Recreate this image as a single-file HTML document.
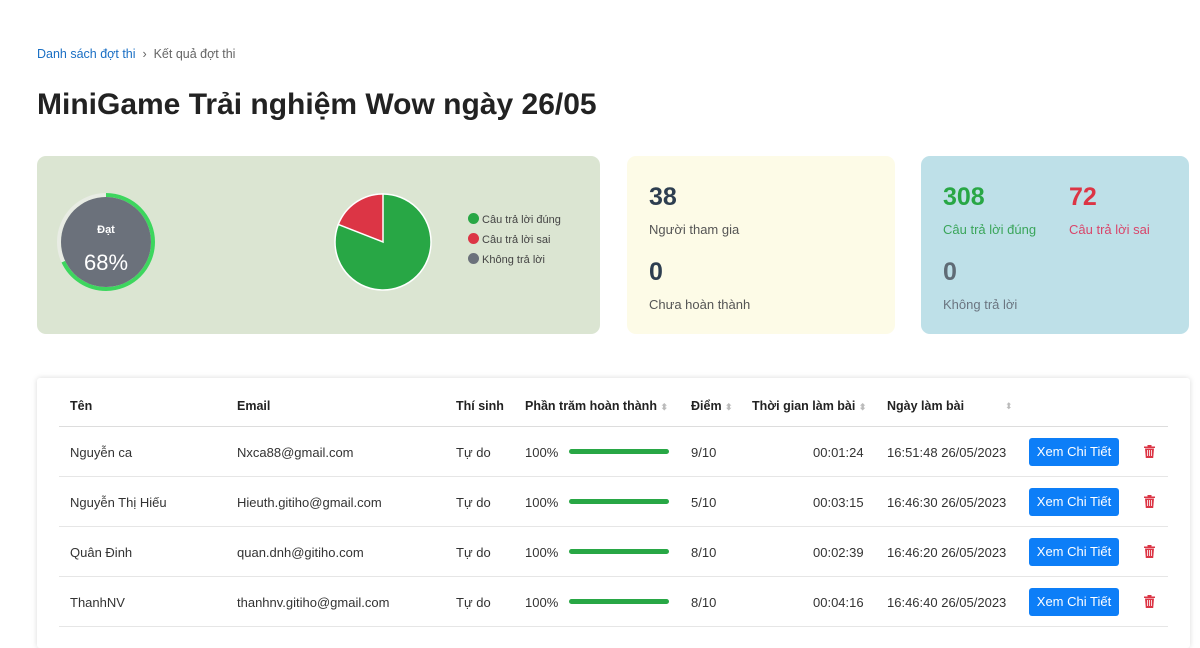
<!DOCTYPE html>
<html><head><meta charset="utf-8"><style>
*{box-sizing:border-box;margin:0;padding:0}
body{width:1200px;height:630px;overflow:hidden;background:#fff;font-family:"Liberation Sans",sans-serif;color:#333;position:relative}
.a{position:absolute;white-space:nowrap}
.card{position:absolute;border-radius:9px}
.big{font-size:25px;font-weight:bold}
.lbl{font-size:13px}
.th{font-size:12.5px;font-weight:bold;color:#222}
.td{font-size:13px;color:#333}
.bar{position:absolute;left:569px;width:100px;height:5px;border-radius:3px;background:#28a745}
.btn{position:absolute;left:1029px;width:90px;height:28px;background:#0d7ef7;color:#fff;border-radius:3px;font-size:13px;text-align:center;line-height:28px}
.line{position:absolute;left:59px;width:1109px;height:1px;background:#e6e6e6}
.s{font-size:9px;color:#bbb;letter-spacing:-1px}
</style></head><body>
<div class="a" style="left:37px;top:47px;font-size:12.5px;color:#1a6fc4">Danh sách đợt thi <span style="color:#666">&nbsp;›&nbsp; Kết quả đợt thi</span></div>
<div class="a" style="left:37px;top:88px;font-size:30px;font-weight:bold;color:#222">MiniGame Trải nghiệm Wow ngày 26/05</div>

<div class="card" style="left:37px;top:156px;width:563px;height:178px;background:#dbe5d2"></div>
<svg class="a" style="left:56px;top:192px" width="100" height="100" viewBox="0 0 100 100">
<circle cx="50" cy="50" r="47" fill="none" stroke="#e8ece4" stroke-width="4"/>
<circle cx="50" cy="50" r="47" fill="none" stroke="#3dd65e" stroke-width="4" stroke-dasharray="200.8 295.3" transform="rotate(-90 50 50)"/>
<circle cx="50" cy="50" r="45" fill="#6b717b"/>
<text x="50" y="41" text-anchor="middle" fill="#fff" font-size="11" font-weight="bold" font-family="Liberation Sans">Đạt</text>
<text x="50" y="78" text-anchor="middle" fill="#fff" font-size="22" font-family="Liberation Sans">68%</text>
</svg>
<svg class="a" style="left:333px;top:192px" width="100" height="100" viewBox="0 0 100 100">
<circle cx="50" cy="50" r="48" fill="#28a745" stroke="#fff" stroke-width="1.5"/>
<path d="M50 50 L50 2 A48 48 0 0 0 5.3 32.4 Z" fill="#dc3545" stroke="#fff" stroke-width="1.5"/>
</svg>
<div class="a" style="left:468px;top:210px;font-size:11px;color:#444;line-height:20px">
<div><span style="display:inline-block;width:11px;height:11px;border-radius:50%;background:#28a745;vertical-align:-1px"></span> Câu trả lời đúng</div>
<div><span style="display:inline-block;width:11px;height:11px;border-radius:50%;background:#dc3545;vertical-align:-1px"></span> Câu trả lời sai</div>
<div><span style="display:inline-block;width:11px;height:11px;border-radius:50%;background:#6b717b;vertical-align:-1px"></span> Không trả lời</div>
</div>

<div class="card" style="left:627px;top:156px;width:268px;height:178px;background:#fdfbe7"></div>
<div class="a big" style="left:649px;top:183px;color:#2e3e50">38</div>
<div class="a lbl" style="left:649px;top:222px;color:#555">Người tham gia</div>
<div class="a big" style="left:649px;top:258px;color:#2e3e50">0</div>
<div class="a lbl" style="left:649px;top:297px;color:#555">Chưa hoàn thành</div>

<div class="card" style="left:921px;top:156px;width:268px;height:178px;background:#bee0e8"></div>
<div class="a big" style="left:943px;top:183px;color:#28a745">308</div>
<div class="a big" style="left:1069px;top:183px;color:#dc3545">72</div>
<div class="a lbl" style="left:943px;top:222px;color:#3aa55a">Câu trả lời đúng</div>
<div class="a lbl" style="left:1069px;top:222px;color:#d9456a">Câu trả lời sai</div>
<div class="a big" style="left:943px;top:258px;color:#5f6b75">0</div>
<div class="a lbl" style="left:943px;top:297px;color:#6b7580">Không trả lời</div>

<div class="card" style="left:37px;top:378px;width:1153px;height:270px;border-radius:3px;box-shadow:0 0 6px rgba(0,0,0,.15)"></div>
<div class="a th" style="left:70px;top:399px">Tên</div>
<div class="a th" style="left:237px;top:399px">Email</div>
<div class="a th" style="left:456px;top:399px">Thí sinh</div>
<div class="a th" style="left:525px;top:399px">Phần trăm hoàn thành <span class="s">⬍</span></div>
<div class="a th" style="left:691px;top:399px">Điểm <span class="s">⬍</span></div>
<div class="a th" style="left:752px;top:399px">Thời gian làm bài <span class="s">⬍</span></div>
<div class="a th" style="left:887px;top:399px">Ngày làm bài</div>
<div class="a s" style="left:1005px;top:401px">⬍</div>
<div class="line" style="top:426px;background:#ddd"></div>

<div class="a td" style="left:70px;top:445px">Nguyễn ca</div>
<div class="a td" style="left:237px;top:445px">Nxca88@gmail.com</div>
<div class="a td" style="left:456px;top:445px">Tự do</div>
<div class="a td" style="left:525px;top:445px">100%</div><div class="bar" style="top:449px"></div>
<div class="a td" style="left:691px;top:445px">9/10</div>
<div class="a td" style="left:813px;top:445px">00:01:24</div>
<div class="a td" style="left:887px;top:445px">16:51:48 26/05/2023</div>
<div class="btn" style="top:438px">Xem Chi Tiết</div>
<div class="line" style="top:476px"></div>

<div class="a td" style="left:70px;top:495px">Nguyễn Thị Hiếu</div>
<div class="a td" style="left:237px;top:495px">Hieuth.gitiho@gmail.com</div>
<div class="a td" style="left:456px;top:495px">Tự do</div>
<div class="a td" style="left:525px;top:495px">100%</div><div class="bar" style="top:499px"></div>
<div class="a td" style="left:691px;top:495px">5/10</div>
<div class="a td" style="left:813px;top:495px">00:03:15</div>
<div class="a td" style="left:887px;top:495px">16:46:30 26/05/2023</div>
<div class="btn" style="top:488px">Xem Chi Tiết</div>
<div class="line" style="top:526px"></div>

<div class="a td" style="left:70px;top:545px">Quân Đinh</div>
<div class="a td" style="left:237px;top:545px">quan.dnh@gitiho.com</div>
<div class="a td" style="left:456px;top:545px">Tự do</div>
<div class="a td" style="left:525px;top:545px">100%</div><div class="bar" style="top:549px"></div>
<div class="a td" style="left:691px;top:545px">8/10</div>
<div class="a td" style="left:813px;top:545px">00:02:39</div>
<div class="a td" style="left:887px;top:545px">16:46:20 26/05/2023</div>
<div class="btn" style="top:538px">Xem Chi Tiết</div>
<div class="line" style="top:576px"></div>

<div class="a td" style="left:70px;top:595px">ThanhNV</div>
<div class="a td" style="left:237px;top:595px">thanhnv.gitiho@gmail.com</div>
<div class="a td" style="left:456px;top:595px">Tự do</div>
<div class="a td" style="left:525px;top:595px">100%</div><div class="bar" style="top:599px"></div>
<div class="a td" style="left:691px;top:595px">8/10</div>
<div class="a td" style="left:813px;top:595px">00:04:16</div>
<div class="a td" style="left:887px;top:595px">16:46:40 26/05/2023</div>
<div class="btn" style="top:588px">Xem Chi Tiết</div>
<div class="line" style="top:626px"></div>

<svg class="a" style="left:1144px;top:445px" width="11" height="13" viewBox="0 0 11 13"><path d="M0 1.5h11v1.5H0zM3.5 0h4v1.5h-4zM1 3.5h9l-.8 9.5H1.8z" fill="#dc3545"/><path d="M3.5 5v6M5.5 5v6M7.5 5v6" stroke="#fff" stroke-width=".8"/></svg>
<svg class="a" style="left:1144px;top:495px" width="11" height="13" viewBox="0 0 11 13"><path d="M0 1.5h11v1.5H0zM3.5 0h4v1.5h-4zM1 3.5h9l-.8 9.5H1.8z" fill="#dc3545"/><path d="M3.5 5v6M5.5 5v6M7.5 5v6" stroke="#fff" stroke-width=".8"/></svg>
<svg class="a" style="left:1144px;top:545px" width="11" height="13" viewBox="0 0 11 13"><path d="M0 1.5h11v1.5H0zM3.5 0h4v1.5h-4zM1 3.5h9l-.8 9.5H1.8z" fill="#dc3545"/><path d="M3.5 5v6M5.5 5v6M7.5 5v6" stroke="#fff" stroke-width=".8"/></svg>
<svg class="a" style="left:1144px;top:595px" width="11" height="13" viewBox="0 0 11 13"><path d="M0 1.5h11v1.5H0zM3.5 0h4v1.5h-4zM1 3.5h9l-.8 9.5H1.8z" fill="#dc3545"/><path d="M3.5 5v6M5.5 5v6M7.5 5v6" stroke="#fff" stroke-width=".8"/></svg>
</body></html>
